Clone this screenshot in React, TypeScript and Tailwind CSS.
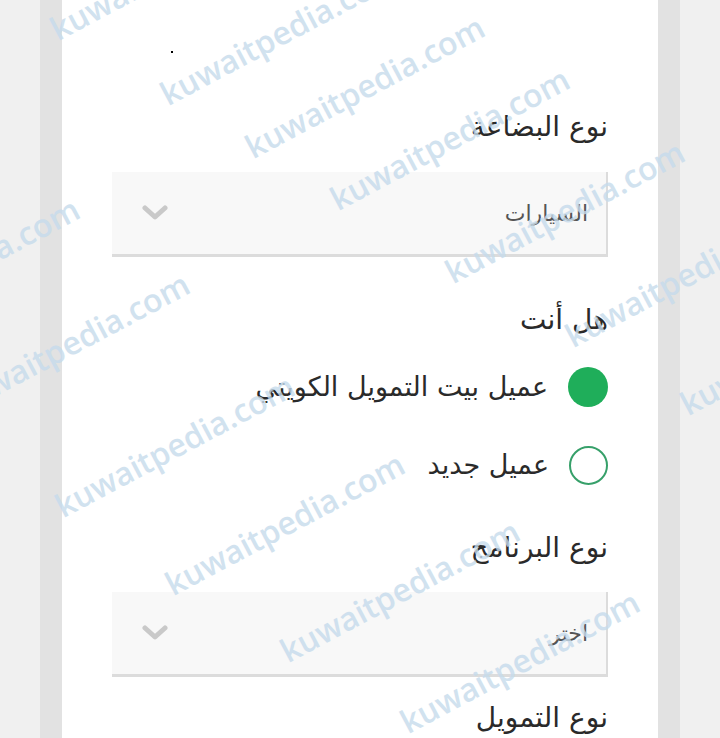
import React from "react";

const marks: [number, number][] = [
  [60, 45],
  [170, 110],
  [255, 163],
  [340, 215],
  [455, 288],
  [575, 352],
  [690, 420],
  [-330, 300],
  [-150, 345],
  [-40, 420],
  [65, 522],
  [175, 600],
  [290, 667],
  [410, 738],
  [-300, 790],
];

function Chevron() {
  return (
    <svg width="26" height="16" viewBox="0 0 26 16" fill="none">
      <path d="M3 3 L13 12 L23 3" stroke="#c9c9c9" strokeWidth="5" strokeLinecap="round" strokeLinejoin="round" />
    </svg>
  );
}

function Select({ value }: { value: string }) {
  return (
    <div className="flex h-[85px] items-center justify-between bg-[#f8f8f8] border-r-2 border-b-[3px] border-[#dcdcdc] pr-[18px] pl-[30px]">
      <span className="text-[22px] text-[#555]">{value}</span>
      <Chevron />
    </div>
  );
}

function Label({ children, className = "" }: { children: React.ReactNode; className?: string }) {
  return <div className={`h-[32px] leading-[32px] text-[28px] text-[#2a2a2a] ${className}`}>{children}</div>;
}

function Radio({ checked, label, className = "" }: { checked: boolean; label: string; className?: string }) {
  return (
    <div className={`flex h-[40px] items-center gap-[20px] ${className}`}>
      {checked ? (
        <div className="h-[40px] w-[40px] shrink-0 rounded-full bg-[#1fae5a]" />
      ) : (
        <div className="h-[39px] w-[39px] shrink-0 rounded-full border-2 border-[#37a06a] bg-white" />
      )}
      <span className="text-[27px] text-[#2a2a2a]">{label}</span>
    </div>
  );
}

export default function App() {
  return (
    <div className="relative flex h-[738px] w-[720px] overflow-hidden bg-[#f0f0f0]" style={{ fontFamily: '"DejaVu Sans", "Noto Sans", sans-serif' }}>
      <div className="w-[40px]" />
      <div className="w-[22px] bg-[#e2e2e2]" />
      <div dir="rtl" className="flex w-[596px] flex-col bg-white px-[50px] pt-[111px]">
        <Label>نوع البضاعة</Label>
        <div className="mt-[29px]">
          <Select value="السيارات" />
        </div>
        <Label className="mt-[47px]">هل أنت</Label>
        <Radio className="mt-[31px]" checked label="عميل بيت التمويل الكويتي" />
        <Radio className="mt-[38px]" checked={false} label="عميل جديد" />
        <Label className="mt-[47px]">نوع البرنامج</Label>
        <div className="mt-[28px]">
          <Select value="اختر" />
        </div>
        <Label className="mt-[25px]">نوع التمويل</Label>
      </div>
      <div className="w-[22px] bg-[#e2e2e2]" />
      <div className="w-[40px]" />
      <div className="absolute left-[171px] top-[51px] h-[2px] w-[2px] bg-black" />
      {marks.map(([x, y], i) => (
        <div
          key={i}
          className="pointer-events-none absolute whitespace-nowrap text-[32px] font-semibold leading-none text-[#c6dbec] opacity-80"
          style={{
            left: x,
            top: y - 32,
            transform: "rotate(-28deg)",
            transformOrigin: "0 100%",
            fontFamily: '"Open Sans", sans-serif',
          }}
        >
          kuwaitpedia.com
        </div>
      ))}
    </div>
  );
}
